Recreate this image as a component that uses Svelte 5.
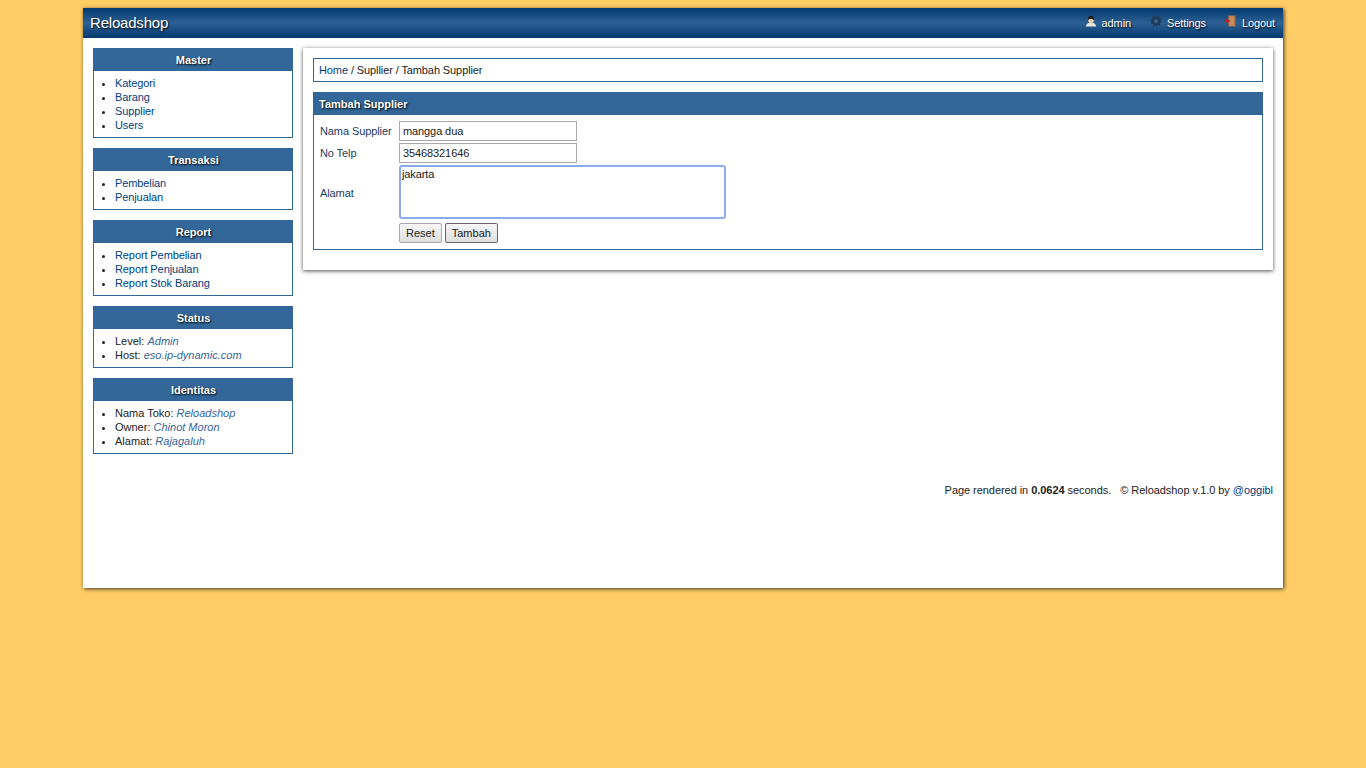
<script>
    const menus = [
        { title: "Master", links: ["Kategori", "Barang", "Supplier", "Users"] },
        { title: "Transaksi", links: ["Pembelian", "Penjualan"] },
        { title: "Report", links: ["Report Pembelian", "Report Penjualan", "Report Stok Barang"] },
    ];
    const infos = [
        { title: "Status", rows: [["Level", "Admin"], ["Host", "eso.ip-dynamic.com"]] },
        { title: "Identitas", rows: [["Nama Toko", "Reloadshop"], ["Owner", "Chinot Moron"], ["Alamat", "Rajagaluh"]] },
    ];
</script>

<div class="wrapper">
    <header>
        <span class="brand">Reloadshop</span>
        <nav>
            <a href="#admin" class="user">
                <svg width="12" height="12" viewBox="0 0 14 14">
                    <path d="M1 13.500 C1.500 9.500 4 9 7 9 C10 9 12.500 9.500 13 13.500 Z" fill="#e8e4d8" />
                    <circle cx="7" cy="6" r="3.200" fill="#f6d5ae" />
                    <path d="M3.400 6 C3.200 2 5 0.800 7 0.800 C9 0.800 10.800 2 10.600 6 C9.500 4.200 4.500 4.200 3.400 6 Z" fill="#1c1c24" />
                </svg>
                admin
            </a>
            <a href="#settings">
                <svg width="12" height="12" viewBox="0 0 14 14">
                    <circle cx="7" cy="7" r="4" fill="none" stroke="#26384e" stroke-width="2.600" />
                    <circle cx="7" cy="7" r="5.800" fill="none" stroke="#26384e" stroke-width="1.400" stroke-dasharray="2 1.500" />
                    <circle cx="7" cy="7" r="1.300" fill="#4d6a8a" />
                </svg>
                Settings
            </a>
            <a href="#logout" class="logout">
                <svg width="12" height="12" viewBox="0 0 14 14">
                    <rect x="5" y="0.500" width="8.500" height="13" fill="#a8683e" />
                    <rect x="6" y="1.500" width="6" height="11" fill="#c98c5c" />
                    <path d="M0.500 7 L4 4.500 V6 H7 V8 H4 V9.500 Z" fill="#d01818" />
                </svg>
                Logout
            </a>
        </nav>
    </header>

    <div class="main">
        <aside>
            {#each menus as menu}
                <section class="box">
                    <h3>{menu.title}</h3>
                    <ul>
                        {#each menu.links as link}
                            <li><a href="#menu">{link}</a></li>
                        {/each}
                    </ul>
                </section>
            {/each}
            {#each infos as info}
                <section class="box">
                    <h3>{info.title}</h3>
                    <ul class="info">
                        {#each info.rows as row}
                            <li>{row[0]}: <em>{row[1]}</em></li>
                        {/each}
                    </ul>
                </section>
            {/each}
        </aside>

        <div class="right">
            <div class="panel">
                <div class="breadcrumb">
                    <a href="#home">Home</a> / Supllier / Tambah Supplier
                </div>
                <section class="form-box">
                    <h4>Tambah Supplier</h4>
                    <form>
                        <label for="nama">Nama Supplier</label>
                        <input id="nama" type="text" value="mangga dua" />
                        <label for="telp">No Telp</label>
                        <input id="telp" type="text" value="35468321646" />
                        <label for="alamat" class="tall">Alamat</label>
                        <textarea id="alamat">jakarta</textarea>
                        <div class="buttons">
                            <button type="reset">Reset</button>
                            <button type="button" class="active">Tambah</button>
                        </div>
                    </form>
                </section>
            </div>
            <footer>
                Page rendered in <b>0.0624</b> seconds. &nbsp; © Reloadshop v.1.0 by <a href="#oggibl">@oggibl</a>
            </footer>
        </div>
    </div>
</div>

<style>
    :global(body) {
        background: #ffcc66;
        font-family: "Liberation Sans", Arial, sans-serif;
        font-size: 11px;
        line-height: 14px;
        letter-spacing: -0.1px;
        color: #222;
        padding-bottom: 20px;
    }
    a {
        color: #00407f;
        text-decoration: none;
    }
    .wrapper {
        width: 1200px;
        height: 580px;
        margin: 8px auto 0;
        background: #fff;
        box-shadow: 1px 1px 4px rgba(0, 0, 0, 0.75);
    }
    header {
        height: 30px;
        display: flex;
        justify-content: space-between;
        align-items: center;
        padding: 0 8px 0 7px;
        background: linear-gradient(to bottom, #03396c, #2d6196 50%, #03396c);
    }
    .brand {
        color: #fff;
        font-size: 15px;
        letter-spacing: -0.2px;
        text-shadow: 1px 1px 2px #000;
    }
    nav {
        display: flex;
        gap: 18px;
    }
    nav a {
        display: flex;
        align-items: center;
        gap: 5px;
        color: #fff;
        text-shadow: 1px 1px 2px #000;
    }
    nav a.user {
        margin-right: 1px;
    }
    nav a.logout {
        gap: 6px;
    }
    nav svg {
        margin-top: -4px;
    }
    .main {
        display: flex;
        gap: 10px;
        padding: 10px;
    }
    aside {
        width: 200px;
        flex: none;
        display: flex;
        flex-direction: column;
        gap: 10px;
    }
    .box {
        border: 1px solid #336699;
    }
    .box h3 {
        margin: -1px -1px 0;
        height: 23px;
        padding-left: 1px;
        background: #336699;
        color: #fff;
        font-size: 11px;
        line-height: 24px;
        letter-spacing: 0;
        text-align: center;
        text-shadow: 1px 1px 2px #000;
    }
    .box ul {
        margin: 0;
        padding: 5px 0 5px 21px;
    }
    .box ul.info {
        letter-spacing: 0;
    }
    .box li em {
        color: #36659b;
    }
    .right {
        flex: 1;
    }
    .panel {
        height: 222px;
        box-sizing: border-box;
        padding: 10px;
        box-shadow: 0 1px 4px rgba(0, 0, 0, 0.7);
    }
    .breadcrumb {
        height: 24px;
        box-sizing: border-box;
        padding: 0 5px;
        border: 1px solid #336699;
        line-height: 22px;
        margin-bottom: 10px;
    }
    .form-box {
        border: 1px solid #336699;
    }
    .form-box h4 {
        margin: -1px -1px 0;
        height: 23px;
        padding-left: 6px;
        background: #336699;
        color: #fff;
        font-size: 11px;
        line-height: 24px;
        letter-spacing: 0;
        text-shadow: 1px 1px 2px #000;
    }
    form {
        display: grid;
        grid-template-columns: 79px 1fr;
        row-gap: 2px;
        align-items: center;
        padding: 6px;
    }
    label {
        color: #1c3d63;
    }
    label.tall {
        padding-top: 2px;
    }
    input,
    textarea {
        box-sizing: border-box;
        font: inherit;
        letter-spacing: -0.1px;
        color: #222;
        background: #fff;
        outline: none;
    }
    input {
        width: 178px;
        height: 20px;
        padding: 0 3px;
        border: 1px solid #a9a9a9;
    }
    textarea {
        display: block;
        width: 327px;
        height: 54px;
        padding: 0 1px;
        resize: none;
        border: 2px solid #8cabe9;
        border-radius: 3px;
    }
    .buttons {
        grid-column: 2;
        display: flex;
        gap: 3px;
        margin-top: 2px;
    }
    button {
        height: 20px;
        padding: 0 6px;
        font: inherit;
        letter-spacing: 0;
        color: #222;
        border: 1px solid #a9a9a9;
        border-radius: 2px;
        background: linear-gradient(to bottom, #f6f6f6, #dedede);
    }
    button.active {
        border-color: #666;
    }
    footer {
        margin-top: 213px;
        text-align: right;
        letter-spacing: -0.05px;
    }
</style>
